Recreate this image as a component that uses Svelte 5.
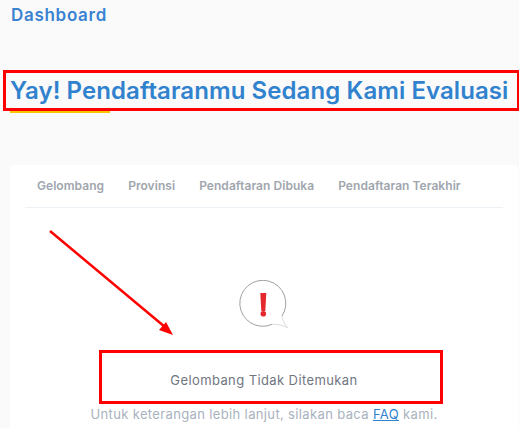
<script>
	const columns = ['Gelombang', 'Provinsi', 'Pendaftaran Dibuka', 'Pendaftaran Terakhir'];
</script>

<div class="page">
	<a class="crumb" href="#dashboard">Dashboard</a>

	<div class="title-wrap">
		<h1 class="title">Yay! Pendaftaranmu Sedang Kami Evaluasi</h1>
		<div class="title-line"></div>
	</div>

	<section class="card">
		<div class="head">
			{#each columns as col}
				<span class="col">{col}</span>
			{/each}
		</div>

		<div class="empty">
			<svg class="bubble" width="52" height="50" viewBox="0 0 52 50" fill="none">
				<path d="M44 36 A23 23 0 1 0 34 44.4" stroke="#a0a0a0" stroke-width="1" />
				<path d="M34 44.4 C39 44 45 45 50 48 C47 45 44.5 41 44 36" stroke="#dcdcdc" stroke-width="1" />
				<path d="M22.3 13 H28.3 L27.3 31 H23.3 Z" fill="#e5282d" />
				<circle cx="25.3" cy="33.8" r="2.8" fill="#e5282d" />
			</svg>
			<div class="message-box">
				<p class="message">Gelombang Tidak Ditemukan</p>
			</div>
			<p class="hint">Untuk keterangan lebih lanjut, silakan baca <a href="#faq">FAQ</a> kami.</p>
		</div>
	</section>

	<svg class="arrow" width="140" height="120" viewBox="0 0 140 120" fill="none">
		<line x1="1" y1="1" x2="116" y2="97" stroke="#ff0000" stroke-width="2.5" />
		<path d="M124 105 L110 100 L117 92 Z" fill="#ff0000" />
	</svg>
</div>

<style>
	:global(body) {
		margin: 0;
		background: #fafafa;
	}
	.page {
		position: relative;
		width: 519px;
		height: 428px;
		overflow: hidden;
		font-family: Inter, 'Open Sans', sans-serif;
	}
	.crumb {
		display: block;
		padding: 5px 0 0 11px;
		font-size: 17px;
		line-height: 20px;
		font-weight: 600;
		letter-spacing: 0.7px;
		color: #3a83d3;
		text-decoration: none;
	}
	.title-wrap {
		margin: 45px 0 0 3px;
	}
	.title {
		box-sizing: border-box;
		width: 516px;
		height: 41px;
		margin: 0;
		padding-left: 4px;
		border: 3px solid #ff0000;
		border-right-width: 2px;
		font-size: 24px;
		line-height: 35px;
		font-weight: 600;
		letter-spacing: 0.08px;
		white-space: nowrap;
		color: #3182ce;
	}
	.title-line {
		width: 100px;
		height: 2px;
		margin-left: 7px;
		background: #f7c600;
	}
	.card {
		box-sizing: border-box;
		height: 300px;
		margin: 52px 1px 0 10px;
		padding: 0 15px;
		background: #fff;
		border-radius: 4px;
	}
	.head {
		display: flex;
		gap: 24px;
		height: 40px;
		padding: 0 0 2px 12px;
		border-bottom: 1px solid #edf2f7;
		align-items: center;
		font-size: 12px;
		font-weight: 600;
		letter-spacing: 0.05px;
		color: #a0a6ae;
	}
	.col {
		white-space: nowrap;
	}
	.empty {
		display: flex;
		flex-direction: column;
		align-items: center;
		padding-top: 72px;
	}
	.bubble {
		display: block;
	}
	.message-box {
		box-sizing: border-box;
		width: 344px;
		height: 54px;
		margin: 20px 0 0 14px;
		padding: 6px 14px 0 0;
		border: 3px solid #ff0000;
		display: flex;
		align-items: center;
		justify-content: center;
	}
	.message {
		margin: 0;
		font-size: 13px;
		letter-spacing: 0.4px;
		color: #6f7680;
	}
	.hint {
		margin: 0;
		font-size: 13px;
		line-height: 20px;
		letter-spacing: 0.36px;
		white-space: nowrap;
		color: #a9b2be;
	}
	.hint a {
		color: #3182ce;
	}
	.arrow {
		position: absolute;
		left: 49px;
		top: 230px;
	}
</style>
